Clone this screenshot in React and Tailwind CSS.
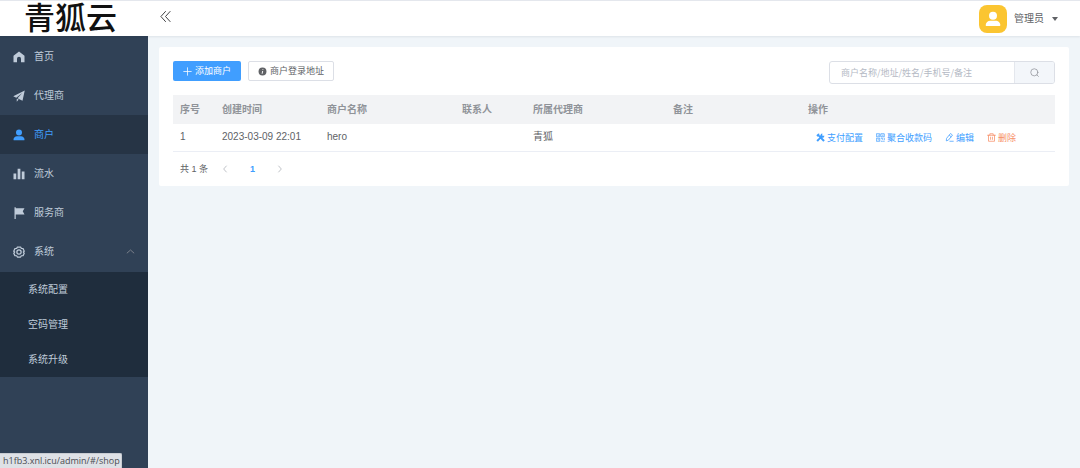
const Icon = ({ children, className = "", box = "0 0 24 24" }) => (
  <svg viewBox={box} className={`shrink-0 ${className}`} fill="currentColor" aria-hidden="true">
    {children}
  </svg>
);

const stroke = { fill: "none", stroke: "currentColor", strokeWidth: 2, strokeLinecap: "round", strokeLinejoin: "round" };

const HomeIcon = () => (
  <Icon className="size-3">
    <path d="M12 1 1 9.500v13h7V15.500a4 4 0 0 1 8 0v7h7v-13z" />
  </Icon>
);
const PlaneIcon = () => (
  <Icon className="size-3">
    <path d="M23.500 1 .5 12.500l6.100 3L18.500 6 9 16.600l10 4.900zM7.500 17.500V23.500l3.900-4.300z" />
  </Icon>
);
const UserIcon = ({ className = "size-3" }) => (
  <Icon className={className}>
    <circle cx="12" cy="7" r="6" />
    <path d="M1 21.500c0-4 3.200-6.800 7-6.800h8c3.800 0 7 2.800 7 6.800 0 .7-.5 1-1 1H2c-.5 0-1-.3-1-1z" />
  </Icon>
);
const BarsIcon = () => (
  <Icon className="size-3">
    <rect x="1" y="11" width="5.500" height="11.500" />
    <rect x="9.250" y="1.500" width="5.500" height="21" />
    <rect x="17.500" y="7" width="5.500" height="15.500" />
  </Icon>
);
const FlagIcon = () => (
  <Icon className="size-3">
    <path d="M3 .5h2.500v2H23L19.500 8.500 23 15H5.500v9H3z" />
  </Icon>
);
const GearIcon = () => (
  <Icon className="size-3">
    <path {...stroke} strokeWidth="2.500" d="M8.800 2h6.400l1.500 3 3.400.2 2.400 5.200L20.600 12l1.900 2.600-2.400 4.600-3.400.3-1.500 2.500H8.800l-1.500-2.500-3.400-.3-2.400-4.600L3.400 12 1.500 10.400l2.400-5.200 3.400-.2z" />
    <circle {...stroke} strokeWidth="2.500" cx="12" cy="12" r="4.300" />
  </Icon>
);
const ToolsIcon = () => (
  <Icon className="size-[9px]">
    <path d="M1 6l5-4.500 4 1-2 2L23.500 19.500 19.500 23 5.500 8.500 3.800 10zM22.500 7A6.500 6.500 0 0 1 14.500 12.500L5 23 1 19.500 11.500 10A6.500 6.500 0 0 1 17 1.500l-.5 5 2 1z" />
  </Icon>
);
const QrIcon = () => (
  <Icon className="size-[9px]">
    <g {...stroke}>
      <path d="M2 2h8v8H2zM14 2h8v8h-8zM2 14h8v8H2zM5.500 6h1M17.500 6h1M5.500 18h1M14 14h3v3M22 14v4M14 22h3M20 22h2" />
    </g>
  </Icon>
);
const EditIcon = () => (
  <Icon className="size-[9px]">
    <path {...stroke} d="M15.500 2 20 5.500 9 19l-5.500 2L4 15.500zM12 6.500l4.300 3.500M13 22h9" />
  </Icon>
);
const TrashIcon = () => (
  <Icon className="size-[9px]">
    <path {...stroke} d="M1.500 6h21M7.500 6V2h9v4M4 6v16h16V6M9.500 11v6M14.500 11v6" />
  </Icon>
);
const Chevron = ({ d, className }) => (
  <Icon className={className}>
    <path {...stroke} d={d} />
  </Icon>
);

const menu = [
  { label: "首页", icon: HomeIcon },
  { label: "代理商", icon: PlaneIcon },
  { label: "商户", icon: UserIcon, active: true },
  { label: "流水", icon: BarsIcon },
  { label: "服务商", icon: FlagIcon },
];
const subMenu = ["系统配置", "空码管理", "系统升级"];

const columns = [
  { label: "序号", width: "w-[42px]" },
  { label: "创建时间", width: "w-[105px]" },
  { label: "商户名称", width: "w-[135px]" },
  { label: "联系人", width: "w-[71px]" },
  { label: "所属代理商", width: "w-[140px]" },
  { label: "备注", width: "w-[135px]" },
  { label: "操作", width: "" },
];
const rows = [["1", "2023-03-09 22:01", "hero", "", "青狐", ""]];

const actions = [
  { label: "支付配置", icon: ToolsIcon, color: "text-[#409eff]" },
  { label: "聚合收款码", icon: QrIcon, color: "text-[#409eff]" },
  { label: "编辑", icon: EditIcon, color: "text-[#409eff]" },
  { label: "删除", icon: TrashIcon, color: "text-[#f78e66]" },
];

function Sidebar() {
  return (
    <aside className="flex w-[148px] shrink-0 flex-col bg-[#304156] text-[#bfcbd9]">
      <nav>
        <ul className="py-px">
          {menu.map(({ label, icon: Glyph, active }) => (
            <li key={label}>
              <a
                href="#/shop"
                className={`flex h-[39px] items-center gap-[9px] px-[13px] ${active ? "bg-[#263445] text-[#409eff]" : ""}`}
              >
                <Glyph />
                {label}
              </a>
            </li>
          ))}
          <li>
            <button type="button" aria-expanded="true" className="flex h-[39px] w-full items-center gap-[9px] px-[13px]">
              <GearIcon />
              系统
              <Chevron d="M3 16l9-8 9 8" className="ml-auto size-[9px] text-[#909399]" />
            </button>
          </li>
        </ul>
        <ul className="bg-[#1f2d3d]">
          {subMenu.map((label) => (
            <li key={label}>
              <a href="#/system" className="flex h-[35px] items-center pl-7">
                {label}
              </a>
            </li>
          ))}
        </ul>
      </nav>
    </aside>
  );
}

function Header() {
  return (
    <header className="z-10 flex h-9 items-center border-t border-[#e4e7ed] bg-white shadow-[0_1px_2px_rgba(0,21,41,0.08)]">
      <div className="w-[148px] shrink-0 pl-6 text-[31px] leading-8 font-medium text-[#111]">青狐云</div>
      <button type="button" aria-label="折叠菜单" className="ml-3 pb-1 text-[#303133]">
        <Icon className="size-[11px]">
          <path {...stroke} d="M12 1 2 12l10 11M22 1 12 12l10 11" />
        </Icon>
      </button>
      <button type="button" className="mr-[22px] ml-auto flex items-center text-[#606266]">
        <span className="flex size-7 items-center justify-center rounded-lg bg-[#fbc531] text-white">
          <UserIcon className="size-4" />
        </span>
        <span className="ml-[7px]">管理员</span>
        <Icon className="ml-2 size-[6px]" box="0 0 6 6">
          <path d="M0 1h6L3 5z" />
        </Icon>
      </button>
    </header>
  );
}

function Toolbar() {
  return (
    <div className="flex items-start gap-[7px] text-[9px]">
      <button type="button" className="flex h-5 items-center gap-[3px] rounded-xs bg-[#409eff] px-[10px] text-white">
        <Icon className="size-[9px]">
          <path {...stroke} d="M12 2v20M2 12h20" />
        </Icon>
        添加商户
      </button>
      <button type="button" className="flex h-5 items-center gap-[3px] rounded-xs border border-[#dcdfe6] px-[9px] text-[#606266]">
        <Icon className="size-[9px]">
          <circle cx="12" cy="12" r="10.500" />
          <path d="M13 5.500v2M12.500 10.500 11 18" stroke="white" strokeWidth="2.500" />
        </Icon>
        商户登录地址
      </button>
      <form className="ml-auto flex h-[23px] w-[226px] overflow-hidden rounded-[3px] border border-[#dcdfe6]" onSubmit={(e) => e.preventDefault()}>
        <input
          aria-label="搜索商户"
          placeholder="商户名称/地址/姓名/手机号/备注"
          className="min-w-0 flex-1 px-[11px] font-['Noto_Sans_CJK_SC',sans-serif] text-[9px] outline-none placeholder:text-[#b4b9c4]"
        />
        <button type="submit" aria-label="搜索" className="flex w-10 items-center justify-center border-l border-[#e4e7ed] bg-[#f3f6fa] text-[#909399]">
          <Icon className="size-[9px]">
            <circle {...stroke} cx="11.500" cy="11.500" r="9.500" />
            <path {...stroke} d="m18.500 18.500 4 4" />
          </Icon>
        </button>
      </form>
    </div>
  );
}

function ShopTable() {
  return (
    <table className="mt-[11px] w-full table-fixed text-left text-[#606266]">
      <thead>
        <tr className="h-[29px] bg-[#f2f3f5] text-[#909399]">
          {columns.map(({ label, width }) => (
            <th key={label} className={`px-[7px] font-bold ${width}`}>
              {label}
            </th>
          ))}
        </tr>
      </thead>
      <tbody>
        {rows.map((cells) => (
          <tr key={cells[0]} className="h-[27px] border-b border-[#ebeef5]">
            {cells.map((cell, i) => (
              <td key={columns[i].label} className="px-[7px]">
                {cell}
              </td>
            ))}
            <td className="px-[15px]">
              <div className="flex gap-[13px] pt-px text-[9px]">
                {actions.map(({ label, icon: Glyph, color }) => (
                  <button type="button" key={label} className={`flex items-center gap-[2px] whitespace-nowrap ${color}`}>
                    <Glyph />
                    {label}
                  </button>
                ))}
              </div>
            </td>
          </tr>
        ))}
      </tbody>
    </table>
  );
}

function Pagination() {
  return (
    <div className="flex h-[34px] items-center pl-[7px] text-[9px] text-[#606266]">
      <span>共 1 条</span>
      <button type="button" aria-label="上一页" className="ml-[13px] text-[#a0a4ac]">
        <Chevron d="M16 3l-8 9 8 9" className="size-2" />
      </button>
      <button type="button" aria-current="page" className="w-[47px] font-bold text-[#409eff]">
        1
      </button>
      <button type="button" aria-label="下一页" className="text-[#a0a4ac]">
        <Chevron d="M8 3l8 9-8 9" className="size-2" />
      </button>
    </div>
  );
}

export default function App() {
  return (
    <div className="flex min-h-screen flex-col bg-[#f0f5f9] font-['Liberation_Sans','Noto_Sans_CJK_SC',sans-serif] text-[10px] leading-4">
      <Header />
      <div className="flex flex-1">
        <Sidebar />
        <main className="min-w-0 flex-1 px-[11px] py-[11px]">
          <section className="rounded-xs bg-white px-[14px] pt-[14px]">
            <Toolbar />
            <ShopTable />
            <Pagination />
          </section>
        </main>
      </div>
      <div className="fixed bottom-0 left-0 z-20 rounded-tr-xs border-t border-r border-[#c8ccd2] bg-[#dee1e6] pr-px pl-[3px] font-['Open_Sans',sans-serif] text-[9px] leading-[14px] text-[#4a4d52]">
        h1fb3.xnl.icu/admin/#/shop
      </div>
    </div>
  );
}
